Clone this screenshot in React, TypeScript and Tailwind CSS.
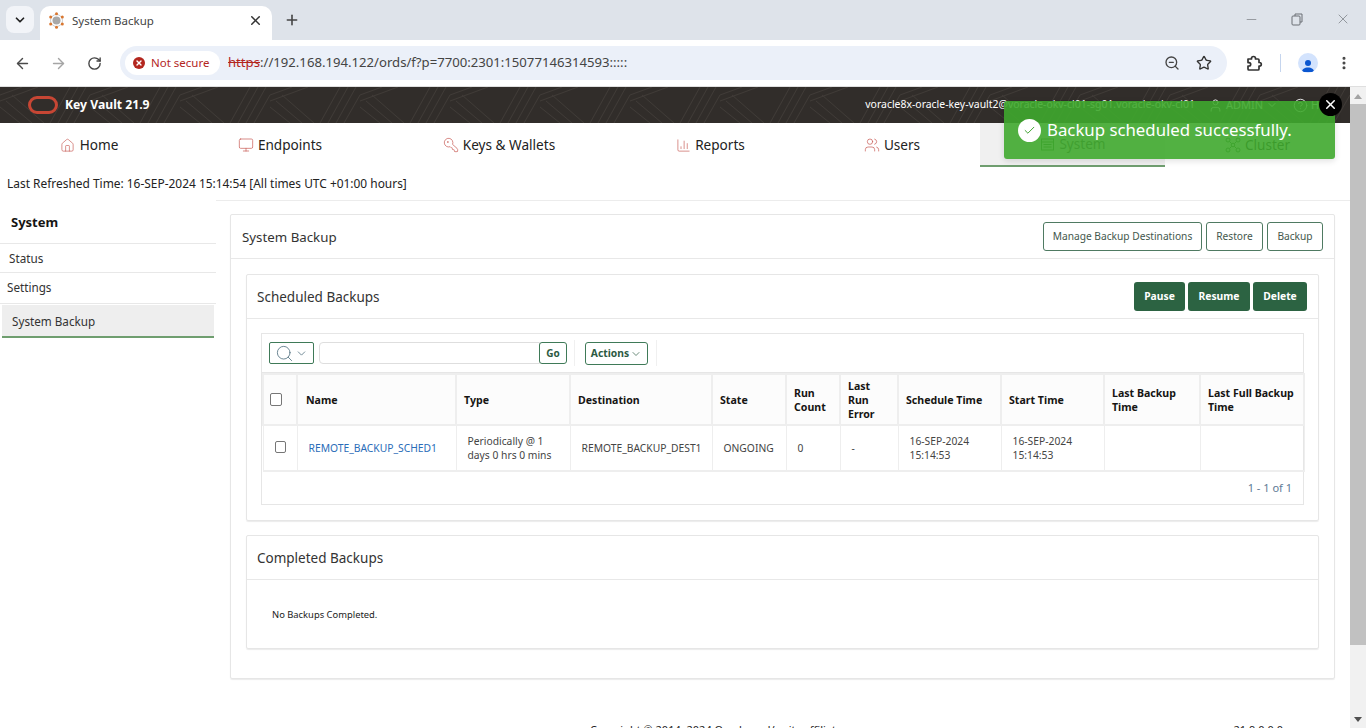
import React from "react";
import {
  ArrowLeft, ArrowRight, RotateCw, ZoomOut, Star, MoreVertical, Plus, X, Minus, ChevronDown, Search,
  House, Monitor, KeyRound, ChartColumn, Users, User, CircleHelp, Check,
} from "lucide-react";

const Favicon = () => (
  <svg width="17" height="17" viewBox="0 0 17 17">
    <circle cx="8.5" cy="8.5" r="4" fill="#a8a8a8" />
    <circle cx="8.5" cy="8.5" r="6" fill="none" stroke="#bbb" strokeWidth="0.8" />
    {[[8.5, 1.8], [14.3, 5.1], [14.3, 11.9], [8.5, 15.2], [2.7, 11.9], [2.7, 5.1]].map(([x, y], i) => (
      <circle key={i} cx={x} cy={y} r="1.5" fill="#d9762f" />
    ))}
  </svg>
);

const HeaderPattern = () => (
  <svg className="absolute inset-0 h-full w-full" aria-hidden="true">
    <defs>
      <pattern id="hp" width="90" height="36" patternUnits="userSpaceOnUse">
        <g stroke="#403b37" strokeWidth="1" fill="none">
          <path d="M0 8 L22 0 M0 14 L38 0 M0 20 L20 36 M6 14 L32 36 M12 8 L44 36" />
          <path d="M50 36 L70 0 M58 36 L78 0 M66 36 L86 0 M74 36 L90 8" />
        </g>
      </pattern>
    </defs>
    <rect width="100%" height="100%" fill="url(#hp)" />
  </svg>
);

const ExtensionIcon = () => (
  <svg width="18" height="18" viewBox="0 0 18 18" fill="none" stroke="#333" strokeWidth="1.7" strokeLinejoin="round" className="ml-[18px]">
    <path d="M3 5h3.5v-.5a2 2 0 0 1 4 0V5H13a1 1 0 0 1 1 1v2.500h.5a1.800 1.800 0 0 1 0 3.600H14V15a1 1 0 0 1-1 1H4a1 1 0 0 1-1-1v-3h1a1.700 1.700 0 0 0 0-3.400H3Z" />
  </svg>
);

const SystemIcon = () => (
  <svg width="15" height="15" viewBox="0 0 15 15" fill="none" stroke="#3b7a35" strokeWidth="1">
    <rect x="1.5" y="2" width="12" height="11" />
    <path d="M1.5 5h12M3.500 7.500h8M3.500 10h8" />
  </svg>
);

const ClusterIcon = () => (
  <svg width="16" height="16" viewBox="0 0 16 16" fill="none" stroke="#3b7a35" strokeWidth="1">
    <circle cx="3" cy="3" r="2" />
    <circle cx="13" cy="3" r="2" />
    <circle cx="3" cy="13" r="2" />
    <circle cx="13" cy="13" r="2" />
    <circle cx="8" cy="8" r="1.8" />
    <path d="M4.500 4.500l2.200 2.200M11.500 4.500L9.300 6.700M4.500 11.500l2.200-2.200M11.500 11.500L9.300 9.300" />
  </svg>
);

const Tab = ({ icon, label, active, w }: { icon: React.ReactNode; label: string; active?: boolean; w: string }) => (
  <div className={`${w} flex h-[44px] items-center justify-center gap-[4px] text-[13.6px] ${active ? "border-b-2 border-[#6f9e6f] bg-[#f0f0f0] text-[#4a4a4a]" : "text-[#222]"}`}>
    <span className="flex h-[16px] w-[16px] items-center justify-center text-[#c9605a]">{icon}</span>
    <span>{label}</span>
  </div>
);

const OutlineBtn = ({ children, w }: { children: React.ReactNode; w: string }) => (
  <div className={`${w} flex h-[29px] items-center justify-center rounded-[3px] border border-[#4f7a62] bg-white text-[10.2px] text-[#44584d]`}>{children}</div>
);

const SolidBtn = ({ children, w }: { children: React.ReactNode; w: string }) => (
  <div className={`${w} flex h-[29px] items-center justify-center rounded-[3px] bg-[#2c6342] text-[10.3px] font-bold text-white`}>{children}</div>
);

const Th = ({ children, w, cls = "pl-[7px]" }: { children?: React.ReactNode; w: string; cls?: string }) => (
  <th className={`${w} ${cls} border-[2px] border-[#eeeeee] bg-[#fcfcfc] pr-[6px] text-left align-middle text-[10.6px] leading-[14px] font-bold text-[#161513]`}>{children}</th>
);

const Td = ({ children, cls = "text-[#444]" }: { children?: React.ReactNode; cls?: string }) => (
  <td className={`border-x border-b-[2px] border-[#eeeeee] pr-[4px] pl-[11px] align-middle text-[10.3px] leading-[14px] ${cls}`}>{children}</td>
);

const Box = ({ cls = "" }: { cls?: string }) => (
  <span className={`block h-[12px] w-[11px] rounded-[2px] border border-[#767676] bg-white ${cls}`} />
);

export default function App() {
  return (
    <div className="relative h-[728px] w-[1366px] overflow-hidden bg-white font-['Noto_Sans','Open_Sans',sans-serif]">
      {/* tab strip */}
      <div className="flex h-[40px] items-end bg-[#dee3ea] pl-[6px]">
        <div className="mb-[7px] flex h-[27px] w-[28px] items-center justify-center rounded-[8px] bg-[#f2f4f8]">
          <ChevronDown size={14} strokeWidth={3} className="text-[#222]" />
        </div>
        <div className="ml-[6px] flex h-[34px] w-[232px] items-center rounded-t-[10px] bg-white pr-[9px] pb-[5px] pl-[8px]">
          <Favicon />
          <span className="ml-[7px] flex-1 text-[11.5px] text-[#444]">System Backup</span>
          <X size={15} strokeWidth={2.4} className="text-[#333]" />
        </div>
        <Plus size={16} strokeWidth={2.4} className="mb-[12px] ml-[12px] text-[#444]" />
        <div className="mb-[13px] ml-auto flex items-center gap-[31px] pr-[15px] text-[#6b6f75]">
          <Minus size={15} strokeWidth={1} />
          <svg width="14" height="14" viewBox="0 0 14 14" fill="none" stroke="#6b6f75"><rect x="2" y="4" width="8" height="9" rx="1" /><path d="M5 4V2h7v8h-2" /></svg>
          <X size={16} strokeWidth={1} />
        </div>
      </div>
      {/* toolbar */}
      <div className="flex h-[47px] items-center rounded-tr-[10px] border-b border-[#dfdfdf] bg-white">
        <div className="flex w-[120px] items-center pl-[14px]">
          <ArrowLeft size={17} strokeWidth={2} className="text-[#4a4a4a]" />
          <ArrowRight size={17} strokeWidth={2} className="ml-[19px] text-[#a5a5a5]" />
          <RotateCw size={15} strokeWidth={2.2} className="ml-[20px] text-[#444]" />
        </div>
        <div className="flex h-[34px] w-[1107px] items-center rounded-full bg-[#ebf0f9] pr-[15px] pl-[5px]">
          <div className="flex h-[24px] w-[95px] items-center rounded-full bg-white pl-[8px]">
            <span className="flex h-[12px] w-[12px] items-center justify-center rounded-full bg-[#b3261e]">
              <X size={8} strokeWidth={4} className="text-white" />
            </span>
            <span className="ml-[6px] text-[11.5px] text-[#b3261e]">Not secure</span>
          </div>
          <span className="ml-[8px] text-[13.15px] text-[#444]"><span className="text-[#b3261e] line-through">https</span>://192.168.194.122/ords/f?p=7700:2301:15077146314593:::::</span>
          <ZoomOut size={16} strokeWidth={2} className="ml-auto text-[#444]" />
          <Star size={16} strokeWidth={2} className="ml-[16px] text-[#333]" />
        </div>
        <ExtensionIcon />
        <span className="ml-[17px] h-[18px] w-px bg-[#c5d5ee]" />
        <span className="ml-[17px] flex h-[20px] w-[20px] items-end justify-center overflow-hidden rounded-full bg-[#d3e3fd]">
          <svg width="14" height="15" viewBox="0 0 14 15" fill="#0b57d0"><circle cx="7" cy="5" r="3" /><path d="M1 14c0-3 2.500-4.500 6-4.500s6 1.500 6 4.500Z" /></svg>
        </span>
        <MoreVertical size={16} strokeWidth={2.6} className="ml-[18px] text-[#444]" />
      </div>

      <div className="flex h-[641px]">
        <div className="w-[1350px] shrink-0">
          {/* app header */}
          <div className="relative flex h-[36px] items-center overflow-hidden bg-[#312d2a] pl-[28px] text-white">
            <HeaderPattern />
            <svg width="30" height="18" viewBox="0 0 30 18" className="relative">
              <rect x="1.500" y="1.500" width="27" height="15" rx="7.500" fill="none" stroke="#c74634" strokeWidth="3" />
            </svg>
            <span className="relative ml-[7px] text-[12.2px] font-bold">Key Vault 21.9</span>
            <span className="relative ml-auto text-[10.45px]">voracle8x-oracle-key-vault2@voracle-okv-cl01-sg01.voracle-okv-cl01</span>
            <User size={15} strokeWidth={1.4} className="relative ml-[13px]" />
            <span className="relative ml-[3px] text-[11px]">ADMIN</span>
            <ChevronDown size={12} className="relative ml-[3px]" />
            <CircleHelp size={15} strokeWidth={1.4} className="relative ml-[15px]" />
            <span className="relative ml-[3px] w-[39px] text-[11px]">Help</span>
          </div>
          {/* nav */}
          <div className="flex h-[44px]">
            <Tab w="w-[178px]" icon={<House size={15} strokeWidth={1.1} />} label="Home" />
            <Tab w="w-[204px]" icon={<Monitor size={16} strokeWidth={1.1} />} label="Endpoints" />
            <Tab w="w-[234px]" icon={<KeyRound size={16} strokeWidth={1.1} className="-scale-x-100" />} label="Keys & Wallets" />
            <Tab w="w-[188px]" icon={<ChartColumn size={15} strokeWidth={1.1} />} label="Reports" />
            <Tab w="w-[176px]" icon={<Users size={16} strokeWidth={1.1} />} label="Users" />
            <Tab w="w-[185px]" active icon={<SystemIcon />} label="System" />
            <Tab w="w-[185px]" icon={<ClusterIcon />} label="Cluster" />
          </div>
          {/* refreshed */}
          <div className="flex h-[33px] items-center pl-[7px] text-[11.93px] text-[#222]">
            Last Refreshed Time: 16-SEP-2024 15:14:54 [All times UTC +01:00 hours]
          </div>
          <div className="flex">
            {/* sidebar */}
            <div className="w-[216px] shrink-0 text-[11.7px] text-[#333]">
              <div className="flex h-[44px] items-center border-b border-[#e8e8e8] pt-[2px] pl-[11px] text-[13px] font-bold text-[#161513]">System</div>
              <div className="flex h-[29px] items-center border-b border-[#e8e8e8] pt-[1px] pl-[9px]">Status</div>
              <div className="flex h-[31px] items-center border-b border-[#e8e8e8] pl-[7px]">Settings</div>
              <div className="mx-[2px] mt-[1px] flex h-[33px] items-center border-b-2 border-[#6f9e6f] bg-[#eeeeee] pt-[2px] pl-[10px]">System Backup</div>
            </div>
            {/* content */}
            <div className="min-w-0 flex-1 border-t border-[#ececec] pt-[13px] pr-[15px] pl-[14px]">
              <div className="h-[465px] rounded-[2px] border border-[#e6e6e6] shadow-[0_1px_1px_rgba(0,0,0,0.08)]">
                <div className="flex h-[44px] items-center justify-between border-b border-[#e8e8e8] pr-[11px] pl-[11px]">
                  <span className="pt-[2px] text-[13.3px] text-[#333]">System Backup</span>
                  <div className="flex gap-[4px]">
                    <OutlineBtn w="w-[159px]">Manage Backup Destinations</OutlineBtn>
                    <OutlineBtn w="w-[57px]">Restore</OutlineBtn>
                    <OutlineBtn w="w-[56px]">Backup</OutlineBtn>
                  </div>
                </div>
                <div className="px-[15px] pt-[15px]">
                  {/* scheduled */}
                  <div className="h-[247px] rounded-[2px] border border-[#e6e6e6] shadow-[0_1px_1px_rgba(0,0,0,0.08)]">
                    <div className="flex h-[44px] items-center justify-between border-b border-[#e8e8e8] pr-[11px] pl-[10px]">
                      <span className="pt-[2px] text-[13.5px] text-[#333]">Scheduled Backups</span>
                      <div className="flex gap-[3px]">
                        <SolidBtn w="w-[51px]">Pause</SolidBtn>
                        <SolidBtn w="w-[62px]">Resume</SolidBtn>
                        <SolidBtn w="w-[54px]">Delete</SolidBtn>
                      </div>
                    </div>
                    <div className="px-[14px] pt-[14px]">
                      <div className="h-[172px] border border-[#e6e6e6]">
                        <div className="flex h-[39px] items-center border-b border-[#e6e6e6] pl-[7px]">
                          <div className="flex h-[22px] w-[45px] items-center justify-center gap-[1px] rounded-[2px] border border-[#3f7a58] text-[#4a6a7a]">
                            <Search size={19} strokeWidth={1} />
                            <ChevronDown size={13} strokeWidth={1.4} />
                          </div>
                          <div className="ml-[5px] h-[22px] w-[221px] rounded-l-[4px] border border-[#dedede] bg-white" />
                          <div className="-ml-px flex h-[22px] w-[28px] items-center justify-center rounded-[3px] border border-[#3f7a58] text-[10px] font-bold text-[#2c5a42]">Go</div>
                          <span className="ml-[7px] h-[26px] w-px bg-[#f0f0f0]" />
                          <div className="ml-[10px] flex h-[23px] w-[63px] items-center justify-center gap-[1px] rounded-[3px] border border-[#3f7a58] pt-[1px] text-[10.3px] font-bold text-[#2c5a42]">
                            Actions<ChevronDown size={12} strokeWidth={1.4} />
                          </div>
                          <span className="ml-[8px] h-[26px] w-px bg-[#f0f0f0]" />
                        </div>
                        <table className="w-full table-fixed border-collapse">
                          <thead>
                            <tr className="h-[51px]">
                              <Th w="w-[34px]" cls="pl-[6px]"><Box cls="h-[13px] w-[12px]" /></Th>
                              <Th w="w-[159px]" cls="pl-[8px]">Name</Th>
                              <Th w="w-[114px]">Type</Th>
                              <Th w="w-[142px]">Destination</Th>
                              <Th w="w-[74px]">State</Th>
                              <Th w="w-[54px]">Run Count</Th>
                              <Th w="w-[58px]">Last Run Error</Th>
                              <Th w="w-[103px]">Schedule Time</Th>
                              <Th w="w-[103px]">Start Time</Th>
                              <Th w="w-[96px]">Last Backup Time</Th>
                              <Th w="w-[104px]">Last Full Backup Time</Th>
                            </tr>
                          </thead>
                          <tbody>
                            <tr className="h-[46px]">
                              <Td cls="text-[#444]"><Box cls="-mt-[3px]" /></Td>
                              <Td cls="text-[#2a6cb8]">REMOTE_BACKUP_SCHED1</Td>
                              <Td>Periodically @ 1 days 0 hrs 0 mins</Td>
                              <Td>REMOTE_BACKUP_DEST1</Td>
                              <Td>ONGOING</Td>
                              <Td>0</Td>
                              <Td>-</Td>
                              <Td>16-SEP-2024 15:14:53</Td>
                              <Td>16-SEP-2024 15:14:53</Td>
                              <Td />
                              <Td />
                            </tr>
                          </tbody>
                        </table>
                        <div className="flex h-[33px] items-center justify-end pr-[11px] text-[11px] text-[#5e7a95]">1 - 1 of 1</div>
                      </div>
                    </div>
                  </div>
                  {/* completed */}
                  <div className="mt-[14px] h-[114px] rounded-[2px] border border-[#e6e6e6] shadow-[0_1px_1px_rgba(0,0,0,0.08)]">
                    <div className="flex h-[44px] items-center border-b border-[#e8e8e8] pt-[2px] pl-[10px] text-[13.5px] text-[#333]">Completed Backups</div>
                    <div className="flex h-[69px] items-center pt-[2px] pl-[25px] text-[9.4px] text-[#222]">No Backups Completed.</div>
                  </div>
                </div>
              </div>
              <div className="mt-[45px] flex text-[11px] leading-[11px] text-[#222]">
                <span className="ml-[360px]">Copyright © 2014, 2024 Oracle and/or its affiliates.</span>
                <span className="mr-[52px] ml-auto">21.9.0.0.0</span>
              </div>
            </div>
          </div>
        </div>
        {/* scrollbar */}
        <div className="flex h-full w-[16px] flex-col items-center bg-[#f1f1f1]">
          <span className="mt-[7px] h-0 w-0 border-x-[4px] border-b-[5px] border-x-transparent border-b-[#a3a3a3]" />
          <span className="mt-[5px] h-[541px] w-full bg-[#c1c1c1]" />
          <span className="mt-auto mb-[6px] h-0 w-0 border-x-[4px] border-t-[5px] border-x-transparent border-t-[#505050]" />
        </div>
      </div>

      {/* toast */}
      <div className="absolute top-[101px] left-[1004px] flex h-[58px] w-[331px] items-center rounded-[3px] bg-[#3fa82e]/90 pl-[14px] text-white shadow-[0_2px_6px_rgba(0,0,0,0.12)]">
        <span className="flex h-[23px] w-[23px] items-center justify-center rounded-full bg-white">
          <Check size={13} strokeWidth={1.8} className="text-[#3da22e]" />
        </span>
        <span className="ml-[6px] text-[16.8px]">Backup scheduled successfully.</span>
      </div>
      <div className="absolute top-[93px] left-[1319px] flex h-[23px] w-[23px] items-center justify-center rounded-full bg-black">
        <X size={15} strokeWidth={2.4} className="text-white" />
      </div>
    </div>
  );
}
